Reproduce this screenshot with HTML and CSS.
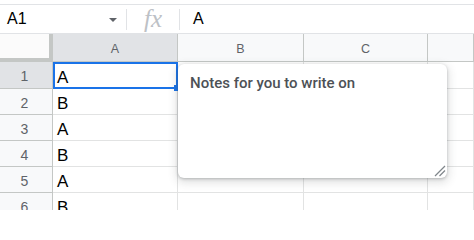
FILE: index.html
```html
<!DOCTYPE html>
<html lang="en">
<head>
<meta charset="utf-8">
<title>Sheet with note</title>
<link rel="stylesheet" href="styles.css">
</head>
<body>
<div class="app">
  <div class="formula-bar">
    <div class="name-box"><span class="name">A1</span><span class="caret"></span></div>
    <div class="sep"></div>
    <div class="fx">fx</div>
    <div class="sep"></div>
    <div class="value">A</div>
  </div>
  <div class="sheet">
    <div class="grid">
      <div class="corner"></div>
      <div class="col-head selected-head">A</div>
      <div class="col-head">B</div>
      <div class="col-head">C</div>
      <div class="col-head"></div>

      <div class="row-head selected-head">1</div>
      <div class="cell">A</div><div class="cell"></div><div class="cell"></div><div class="cell"></div>

      <div class="row-head">2</div>
      <div class="cell">B</div><div class="cell"></div><div class="cell"></div><div class="cell"></div>

      <div class="row-head">3</div>
      <div class="cell">A</div><div class="cell"></div><div class="cell"></div><div class="cell"></div>

      <div class="row-head">4</div>
      <div class="cell">B</div><div class="cell"></div><div class="cell"></div><div class="cell"></div>

      <div class="row-head">5</div>
      <div class="cell">A</div><div class="cell"></div><div class="cell"></div><div class="cell"></div>

      <div class="row-head">6</div>
      <div class="cell">B</div><div class="cell"></div><div class="cell"></div><div class="cell"></div>
    </div>
    <div class="selection"><span class="handle"></span></div>
    <div class="note">
      <div class="note-text">Notes for you to write on</div>
      <svg class="resize" width="12" height="12" viewBox="0 0 12 12">
        <line x1="1" y1="11" x2="11" y2="1" />
        <line x1="5.5" y1="11" x2="11" y2="5.5" />
      </svg>
    </div>
  </div>
</div>
</body>
</html>
```

FILE: styles.css
```css
* { box-sizing: border-box; }
html, body { margin: 0; padding: 0; }
body {
  width: 474px;
  height: 210px;
  overflow: hidden;
  background: #fff;
  font-family: "Liberation Sans", Arial, sans-serif;
  color: #000;
}

.formula-bar {
  margin-top: 4px;
  height: 30px;
  border-top: 1px solid #e1e3e6;
  border-bottom: 1px solid #e1e3e6;
  display: flex;
  align-items: center;
}
.name-box {
  width: 126px;
  height: 100%;
  display: flex;
  align-items: center;
  justify-content: space-between;
  padding: 0 9px 0 7px;
  font-size: 16px;
}
.caret {
  width: 0;
  height: 0;
  border-left: 4px solid transparent;
  border-right: 4px solid transparent;
  border-top: 4px solid #5f6368;
  margin-top: 2px;
}
.sep {
  width: 1px;
  height: 21px;
  background: #e1e3e6;
}
.fx {
  width: 52px;
  text-align: center;
  font-family: "Liberation Serif", "DejaVu Serif", serif;
  font-style: italic;
  font-size: 25px;
  line-height: 28px;
  color: #bdc1c6;
}
.value {
  padding-left: 13px;
  font-size: 16px;
}

.sheet { position: relative; }
.grid {
  display: grid;
  grid-template-columns: 53px 125px 126px 124px 1fr;
  grid-template-rows: 28px 27px repeat(5, 26px);
}
.cell {
  border-right: 1px solid #e2e3e3;
  border-bottom: 1px solid #e2e3e3;
  font-size: 17px;
  line-height: 20px;
  padding-left: 4px;
  display: flex;
  align-items: flex-end;
}
.corner {
  background: #fbfbfb;
  border-right: 4px solid #c4c7c5;
  border-bottom: 4px solid #c4c7c5;
}
.col-head {
  background: #f8f9fa;
  border-right: 1px solid #c4c7c5;
  border-bottom: 1px solid #c4c7c5;
  font-size: 12.5px;
  color: #5f6368;
  display: flex;
  align-items: center;
  justify-content: center;
  padding-top: 2px;
}
.row-head {
  background: #f8f9fa;
  border-right: 1px solid #c4c7c5;
  border-bottom: 1px solid #c4c7c5;
  font-size: 14px;
  color: #5f6368;
  display: flex;
  align-items: center;
  justify-content: center;
  padding-right: 3px;
  padding-top: 2px;
}
.selected-head { background: #e1e3e6; }

.selection {
  position: absolute;
  left: 53px;
  top: 28px;
  width: 125px;
  height: 27px;
  border: 2px solid #1a73e8;
}
.handle {
  position: absolute;
  right: -4px;
  bottom: -4px;
  width: 6px;
  height: 6px;
  background: #1a73e8;
}

.note {
  position: absolute;
  left: 178px;
  top: 30px;
  width: 269px;
  height: 114px;
  background: #fff;
  border-radius: 6px;
  box-shadow: 0 1px 3px rgba(60, 64, 67, 0.3), 0 3px 8px 2px rgba(60, 64, 67, 0.15);
  padding: 10px 12px;
}
.note-text {
  font-family: Roboto, "Liberation Sans", sans-serif;
  font-weight: 500;
  font-size: 15px;
  line-height: 18px;
  color: #4d5156;
}
.resize {
  position: absolute;
  right: 1px;
  bottom: 1px;
  stroke: #80868b;
  stroke-width: 1.2;
}
```
